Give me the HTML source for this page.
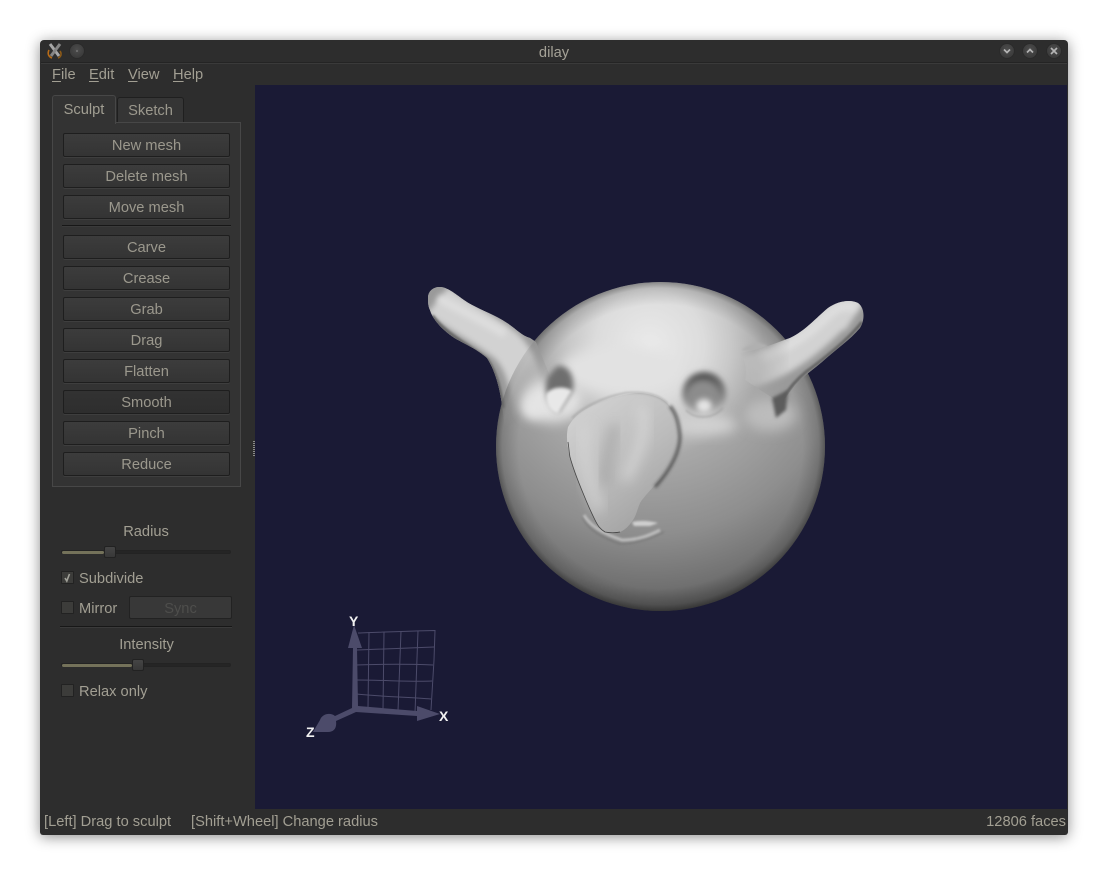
<!DOCTYPE html>
<html><head><meta charset="utf-8"><title>dilay</title>
<style>
html,body{margin:0;padding:0;background:#fff;width:1108px;height:875px;overflow:hidden}
body{position:relative;font-family:"Liberation Sans",sans-serif;font-size:14.67px;color:#a29f93}
.a{position:absolute;white-space:nowrap}
#win{position:absolute;left:40px;top:40px;width:1028px;height:795px;background:#2d2d2d;border-radius:4px 4px 3px 3px;box-shadow:0 2px 14px rgba(0,0,0,.45)}
.btn{position:absolute;left:63px;width:165px;height:22px;border:1px solid #1e1e1e;border-radius:2px;background:linear-gradient(#3c3c3c,#343434);text-align:center;line-height:24px;color:#9b988d;box-shadow:0 1px 0 #3e3e3e}
.dk{background:linear-gradient(#323232,#2e2e2e)}
.cb{position:absolute;left:61px;width:11px;height:11px;border:1px solid #222;background:#3c3c3a;border-radius:1px}
.wb{position:absolute;width:14px;height:14px;border-radius:50%;background:radial-gradient(circle at 50% 40%,#4d4d4d,#343434);box-shadow:0 0 1px #1a1a1a}
u{text-decoration:underline;text-underline-offset:2px}
.tr{position:absolute;height:2px;background:#252525;border:1px solid #232323;border-radius:2px}
.fill{position:absolute;height:3px;background:#74725a;border-radius:2px}
.hd{position:absolute;width:10px;height:10px;background:linear-gradient(#454545,#383838);border:1px solid #222;border-radius:2px}
.hr{position:absolute;height:1px;background:#171717;box-shadow:0 1px 0 #3a3a3a}
</style></head><body>
<div id="win"></div>
<svg class="a" style="left:46px;top:42px" width="18" height="18" viewBox="0 0 18 18"><path d="M4 2L13 14" stroke="#a8a8a8" stroke-width="3"/><path d="M14 2L5 14" stroke="#868686" stroke-width="3"/><path d="M3 8C1 12 3 15 6 16" stroke="#b86c18" stroke-width="1.600" fill="none"/><path d="M14 9C16 12 15 15 12 16" stroke="#8c5a18" stroke-width="1.600" fill="none"/></svg>
<div class="wb" style="left:70px;top:44px"></div><div class="a" style="left:76px;top:50px;width:2px;height:2px;background:#6a6a6a"></div>
<div class="wb" style="left:1000px;top:44px"></div>
<div class="wb" style="left:1023px;top:44px"></div>
<div class="wb" style="left:1047px;top:44px"></div>
<svg class="a" style="left:999px;top:43px" width="64" height="16" fill="none" stroke="#b4b4b4" stroke-width="1.700"><path d="M5 6.500L8 9.500 11 6.500M28 9.500L31 6.500 34 9.500M52 5L58 11M58 5L52 11"/></svg>
<div class="a" style="left:0;top:45px;width:1108px;text-align:center;color:#a5a297">dilay</div>
<div class="hr" style="left:41px;top:62px;width:1026px;background:#242424"></div>
<div class="a" style="left:52px;top:67px"><u>F</u>ile</div>
<div class="a" style="left:89px;top:67px"><u>E</u>dit</div>
<div class="a" style="left:128px;top:67px"><u>V</u>iew</div>
<div class="a" style="left:173px;top:67px"><u>H</u>elp</div>
<div class="a" style="left:255px;top:85px;width:812px;height:724px;background:#1a1a35"></div>

<div class="a" style="left:52px;top:122px;width:187px;height:363px;border:1px solid #474747;background:#333"></div>
<div class="a" style="left:52px;top:95px;width:62px;height:28px;border:1px solid #474747;border-bottom:0;border-radius:3px 3px 0 0;background:#333;text-align:center;line-height:29px">Sculpt</div>
<div class="a" style="left:117px;top:97px;width:65px;height:24px;border:1px solid #1f1f1f;border-bottom:0;border-radius:3px 3px 0 0;background:#353535;text-align:center;line-height:27px;color:#9b988d">Sketch</div>

<div class="btn" style="top:133px">New mesh</div>
<div class="btn" style="top:164px">Delete mesh</div>
<div class="btn" style="top:195px">Move mesh</div>
<div class="hr" style="left:62px;top:225px;width:169px"></div>
<div class="btn" style="top:235px">Carve</div>
<div class="btn" style="top:266px">Crease</div>
<div class="btn" style="top:297px">Grab</div>
<div class="btn" style="top:328px">Drag</div>
<div class="btn" style="top:359px">Flatten</div>
<div class="btn dk" style="top:390px">Smooth</div>
<div class="btn" style="top:421px">Pinch</div>
<div class="btn" style="top:452px">Reduce</div>

<div class="a" style="left:253px;top:441px;width:2px;height:16px;background:repeating-linear-gradient(#8a8a8a 0 1px,#2d2d2d 1px 2px)"></div>

<div class="a" style="left:60px;top:524px;width:172px;text-align:center">Radius</div>
<div class="tr" style="left:61px;top:550px;width:168px"></div>
<div class="fill" style="left:62px;top:551px;width:42px"></div>
<div class="hd" style="left:104px;top:546px"></div>
<div class="cb" style="top:571px"></div>
<svg class="a" style="left:61px;top:571px" width="13" height="13" fill="none" stroke="#a0a098" stroke-width="1.600"><path d="M4 7L5.800 10 8.500 3"/></svg>
<div class="a" style="left:79px;top:571px">Subdivide</div>
<div class="cb" style="top:601px"></div>
<div class="a" style="left:79px;top:601px">Mirror</div>
<div class="a" style="left:129px;top:596px;width:101px;height:21px;border:1px solid #222;border-radius:2px;background:#383838;text-align:center;line-height:24px;color:#4e4e4c">Sync</div>
<div class="hr" style="left:60px;top:626px;width:172px"></div>
<div class="a" style="left:60px;top:637px;width:173px;text-align:center">Intensity</div>
<div class="tr" style="left:61px;top:663px;width:168px"></div>
<div class="fill" style="left:62px;top:664px;width:70px"></div>
<div class="hd" style="left:132px;top:659px"></div>
<div class="cb" style="top:684px"></div>
<div class="a" style="left:79px;top:684px">Relax only</div>

<div class="a" style="left:44px;top:814px">[Left] Drag to sculpt</div>
<div class="a" style="left:191px;top:814px">[Shift+Wheel] Change radius</div>
<div class="a" style="right:42px;top:814px">12806 faces</div>

<svg class="a" style="left:0;top:0" width="1108" height="875" viewBox="0 0 1108 875">
<defs>
<radialGradient id="sph" gradientUnits="userSpaceOnUse" cx="650" cy="345" r="270">
<stop offset="0" stop-color="#eaeaea"/><stop offset=".2" stop-color="#dcdcdc"/><stop offset=".3" stop-color="#c8c8c8"/><stop offset=".42" stop-color="#a8a8a8"/><stop offset=".7" stop-color="#8e8e8e"/><stop offset=".9" stop-color="#707070"/><stop offset="1" stop-color="#505050"/>
</radialGradient>
<radialGradient id="edge" gradientUnits="userSpaceOnUse" cx="660.500" cy="446.500" r="165">
<stop offset=".86" stop-color="#000" stop-opacity="0"/><stop offset=".96" stop-color="#000" stop-opacity=".14"/><stop offset="1" stop-color="#000" stop-opacity=".38"/>
</radialGradient>
<linearGradient id="eye" x1="0" y1="0" x2="0" y2="1"><stop offset="0" stop-color="#4e4e4e"/><stop offset=".6" stop-color="#8a8a8a"/><stop offset="1" stop-color="#cfcfcf"/></linearGradient>
<linearGradient id="ns" x1=".1" y1="0" x2=".7" y2="1"><stop offset="0" stop-color="#d4d4d4"/><stop offset=".55" stop-color="#bcbcbc"/><stop offset="1" stop-color="#a0a0a0"/></linearGradient>
<linearGradient id="fl" gradientUnits="userSpaceOnUse" x1="505" y1="360" x2="540" y2="395"><stop offset="0" stop-color="#fff"/><stop offset="1" stop-color="#000"/></linearGradient>
<linearGradient id="fr" gradientUnits="userSpaceOnUse" x1="738" y1="0" x2="790" y2="0"><stop offset="0" stop-color="#000"/><stop offset="1" stop-color="#fff"/></linearGradient>
<mask id="ml" maskUnits="userSpaceOnUse" x="400" y="260" width="200" height="220"><rect x="400" y="260" width="200" height="220" fill="url(#fl)"/></mask>
<mask id="mr" maskUnits="userSpaceOnUse" x="720" y="280" width="160" height="140"><rect x="720" y="280" width="160" height="140" fill="url(#fr)"/></mask>
<filter id="b1" x="-50%" y="-50%" width="200%" height="200%"><feGaussianBlur stdDeviation="1"/></filter>
<filter id="b15" x="-50%" y="-50%" width="200%" height="200%"><feGaussianBlur stdDeviation="1.700"/></filter>
<filter id="b2" x="-50%" y="-50%" width="200%" height="200%"><feGaussianBlur stdDeviation="3"/></filter>
<filter id="b3" x="-50%" y="-50%" width="200%" height="200%"><feGaussianBlur stdDeviation="6"/></filter>
<filter id="b4" x="-50%" y="-50%" width="200%" height="200%"><feGaussianBlur stdDeviation="5"/></filter>
<clipPath id="cs"><circle cx="660.500" cy="446.500" r="164.500"/></clipPath>
<clipPath id="cl"><path d="M428 298C428 289 437 285 445 288C455 292 462 300 472 305C483 311 495 315 507 323C516 329 522 336 530 338L536 342L560 400V470H510L502 405C500 390 496 372 487 358C476 348 462 343 453 337C443 330 433 320 430 310C428 306 428 302 428 298Z"/></clipPath>
<clipPath id="cr"><path d="M740 353C762 349 776 343 790 338C805 331 816 318 828 308C838 301 850 299 858 303C865 308 865 320 860 328C850 340 835 350 822 362C815 368 805 375 795 385C790 392 785 398 782 404L745 380C747 370 745 360 740 353Z"/></clipPath>
<g id="lhorn" clip-path="url(#cl)">
<rect x="420" y="280" width="150" height="190" fill="#9a9a9a"/>
<path d="M438 300C458 316 480 326 505 345C522 360 532 390 532 450" fill="none" stroke="#d2d2d2" stroke-width="34" filter="url(#b2)"/>
<path d="M438 298C456 308 478 318 505 334" fill="none" stroke="#dedede" stroke-width="8" filter="url(#b2)"/>
<path d="M432 316C445 334 470 346 487 360C497 374 500 392 503 408" fill="none" stroke="#666" stroke-width="4" filter="url(#b1)"/>
</g>
</defs>

<use href="#lhorn"/>
<circle cx="660.500" cy="446.500" r="164.500" fill="url(#sph)"/>
<g clip-path="url(#cs)">
<circle cx="660.500" cy="446.500" r="165" fill="url(#edge)"/>
<ellipse cx="552" cy="400" rx="30" ry="22" fill="#e4e4e4" filter="url(#b3)"/>
<ellipse cx="705" cy="425" rx="32" ry="10" fill="#d2d2d2" filter="url(#b3)"/>
<ellipse cx="770" cy="415" rx="26" ry="16" fill="#bcbcbc" filter="url(#b3)"/>
<ellipse cx="620" cy="370" rx="60" ry="24" fill="#e2e2e2" filter="url(#b3)"/>
</g>
<g mask="url(#ml)"><use href="#lhorn"/></g>
<ellipse cx="533" cy="408" rx="11" ry="11" fill="#e4e4e4" filter="url(#b4)"/>
<!-- left eye -->
<path d="M557 366C568 364 575 376 573 390L558 413C548 408 542 388 548 376Z" fill="#6e6e6e" filter="url(#b2)"/>
<path d="M546 394C552 386 566 386 572 391L558 414C549 412 545 404 546 394Z" fill="#e8e8e8" filter="url(#b15)"/>
<!-- right eye -->
<circle cx="704" cy="394" r="22" fill="url(#eye)" filter="url(#b2)"/>
<circle cx="703" cy="396" r="15" fill="#8c8c8c" filter="url(#b2)"/>
<ellipse cx="704" cy="406" rx="8" ry="7" fill="#e4e4e4" filter="url(#b2)"/>
<path d="M686 410C694 419 712 420 723 408" stroke="#8a8a8a" stroke-width="1.400" fill="none" filter="url(#b1)" opacity=".5"/>
<path d="M741 350C752 342 760 342 768 346L760 352Z" fill="#b0b0b0" filter="url(#b1)"/>
<!-- right horn -->
<g mask="url(#mr)"><g clip-path="url(#cr)">
<rect x="735" y="295" width="135" height="115" fill="#9a9a9a"/>
<path d="M735 375C775 368 805 345 830 320C840 312 850 310 856 314" fill="none" stroke="#d2d2d2" stroke-width="32" filter="url(#b2)"/>
<path d="M760 358C785 350 810 334 832 312C840 306 850 305 856 308" fill="none" stroke="#dedede" stroke-width="9" filter="url(#b2)"/>
<path d="M862 322C850 338 825 358 806 372C796 380 790 388 783 398" fill="none" stroke="#606060" stroke-width="3" filter="url(#b1)"/>
</g></g>
<path d="M772 398L788 390 786 410 776 418Z" fill="#5c5c5c" filter="url(#b15)"/>

<!-- mouth -->
<path d="M583 517C586 528 602 538 620 544C636 544 652 538 664 532" fill="none" stroke="#6e6e6e" stroke-width="1.500" filter="url(#b1)" opacity=".6"/>
<path d="M584 515C590 526 604 534 622 540C640 540 652 534 660 530" fill="none" stroke="#bdbdbd" stroke-width="3" filter="url(#b1)"/>
<path d="M632 522C642 520 650 521 658 523L650 526 634 526Z" fill="#cfcfcf" filter="url(#b1)"/>
<!-- nose -->
<path d="M568 427C572 420 576 416 580 413C590 406 598 403 607 400C618 396 630 393 640 393C652 394 662 398 667 403C674 410 677 418 678 427C680 436 679 445 677 453C672 466 664 476 653 487C647 494 643 498 640 503C637 510 636 516 633 520C629 526 625 530 620 532C614 533 609 533 605 532C600 529 597 525 595 520C591 512 587 503 583 493C578 481 573 468 570 457C567 446 566 436 568 427Z" fill="url(#ns)"/>
<path d="M585 425C582 450 588 480 600 510" stroke="#d8d8d8" stroke-width="12" fill="none" filter="url(#b3)" opacity=".6"/>
<path d="M615 425C610 445 606 465 604 485" stroke="#989898" stroke-width="9" fill="none" filter="url(#b3)" opacity=".6"/>
<path d="M640 405C650 425 640 450 625 480" stroke="#d8d8d8" stroke-width="10" fill="none" filter="url(#b3)" opacity=".8"/>
<path d="M572 418C582 408 600 398 625 393C645 391 660 395 668 404" stroke="#8a8a8a" stroke-width="1.500" fill="none" filter="url(#b1)" opacity=".6"/>
<path d="M670 406C677 414 679 425 680 436C680 450 672 468 655 487" stroke="#3c3c3c" stroke-width="3" fill="none" filter="url(#b15)" opacity=".8"/>
<path d="M568 442C569 448 569 452 570 457C573 468 578 481 583 493C587 503 591 512 595 520C598 526 600 529 605 532C610 533 615 533 620 532" stroke="#2a2a2a" stroke-width=".8" fill="none" opacity=".8"/>

<g fill="none" stroke="#4c4b6a" stroke-width="1">
<path d="M358 633C385 632 410 631 435 630.500L434 660 431 710"/>
<path d="M357 650C385 649 410 648 434 647M356 665C385 664 410 664 433 665M356 680C385 680 410 682 432 681M356 694C385 697 410 697 431 699"/>
<path d="M369 632L368 708M384 632L383 710M401 631L398 711M418 631L415 713"/>
</g>
<path d="M353 648H348L354 625 362 648H357L358 706 417 711V706L440 714 417 721V716L356 712 336 721C337 728 334 732 328 732L313 732 320 720C322 714 330 712 335 716L352 708Z" fill="#4c4b6a"/>
<g font-family="Liberation Sans,sans-serif" font-size="14" font-weight="700" fill="#f2f2f2">
<text x="349" y="626">Y</text><text x="439" y="721">X</text><text x="306" y="737">Z</text>
</g>
</svg>
</body></html>
